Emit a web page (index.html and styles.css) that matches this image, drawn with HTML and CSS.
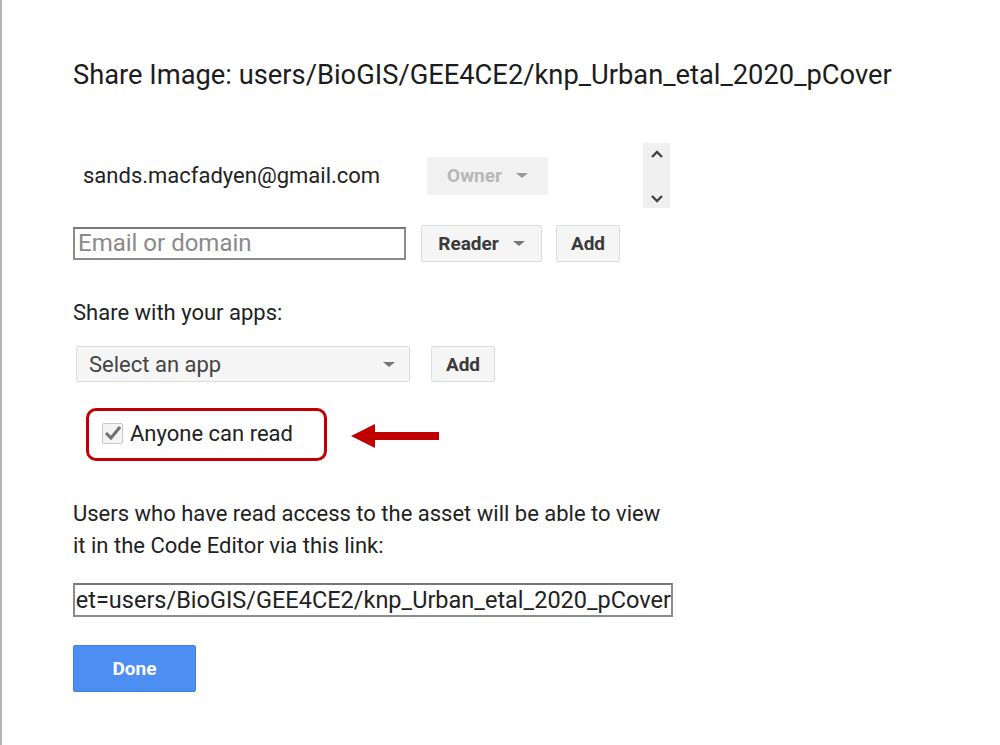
FILE: index.html
```html
<!DOCTYPE html>
<html lang="en">
<head>
  <meta charset="UTF-8" />
  <meta name="viewport" content="width=device-width, initial-scale=1" />
  <title>Share Image</title>
  <link rel="stylesheet" href="styles.css">
</head>
<body>
  <div class="dialog">
    <h1 class="title">Share Image: users/BioGIS/GEE4CE2/knp_Urban_etal_2020_pCover</h1>

    <div class="owner-row">
      <div class="owner-email">sands.macfadyen@gmail.com</div>
      <div class="btn btn-disabled">Owner <span class="caret"></span></div>
      <div class="scroller">
        <svg width="14" height="10" viewBox="0 0 14 10"><polyline points="2,8 7,3 12,8" fill="none" stroke="#444" stroke-width="2.4"/></svg>
        <svg width="14" height="10" viewBox="0 0 14 10"><polyline points="2,2 7,7 12,2" fill="none" stroke="#444" stroke-width="2.4"/></svg>
      </div>
    </div>

    <div class="add-row">
      <div class="text-input placeholder">Email or domain</div>
      <div class="btn btn-role">Reader <span class="caret"></span></div>
      <div class="btn btn-add">Add</div>
    </div>

    <p class="label">Share with your apps:</p>

    <div class="app-row">
      <div class="select">Select an app <span class="caret"></span></div>
      <div class="btn btn-add btn-add-app">Add</div>
    </div>

    <div class="public-row">
      <div class="highlight">
        <span class="checkbox">
          <svg width="19" height="19" viewBox="0 0 19 19"><polyline points="3,9 8,14 17,3" fill="none" stroke="#6f6f6f" stroke-width="3"/></svg>
        </span>
        <span class="check-label">Anyone can read</span>
      </div>
      <svg class="arrow" width="88" height="26" viewBox="0 0 88 26"><polygon points="0,13 24,1 24,9 88,9 88,17 24,17 24,25" fill="#c00000"/></svg>
    </div>

    <p class="note">Users who have read access to the asset will be able to view it in the Code Editor via this link:</p>

    <div class="link-box"><span>https://code.earthengine.google.com/?asset=users/BioGIS/GEE4CE2/knp_Urban_etal_2020_pCover</span></div>

    <div class="btn-done">Done</div>
  </div>
</body>
</html>
```

FILE: styles.css
```css
* {
  margin: 0;
  padding: 0;
  box-sizing: border-box;
}

html, body {
  height: 100%;
  background: #fff;
  font-family: Roboto, 'Liberation Sans', Arial, sans-serif;
  color: #222;
}

body {
  border-left: 2px solid #b4b4b4;
  overflow: hidden;
}

.dialog {
  padding: 59px 0 0 71px;
}

.title {
  font-size: 27.3px;
  font-weight: 400;
  line-height: 32px;
  color: #1c1c1c;
}

.owner-row {
  display: flex;
  align-items: center;
  height: 65px;
  margin-top: 52px;
}

.owner-email {
  width: 354px;
  padding-left: 10px;
  font-size: 22px;
}

.btn {
  display: flex;
  align-items: center;
  justify-content: center;
  font-size: 19px;
  font-weight: 700;
  border-radius: 2px;
}

.btn-disabled {
  width: 121px;
  height: 38px;
  background: #f1f1f1;
  color: #b8b8b8;
}

.caret {
  display: inline-block;
  width: 0;
  height: 0;
  margin-left: 14px;
  border-left: 6px solid transparent;
  border-right: 6px solid transparent;
  border-top: 5px solid #777;
}

.btn-disabled .caret {
  border-top-color: #999;
}

.scroller {
  width: 27px;
  height: 65px;
  margin-left: 95px;
  background: #f0f0f0;
  display: flex;
  flex-direction: column;
  align-items: center;
  justify-content: space-between;
  padding: 6px 0 4px;
}

.add-row {
  display: flex;
  align-items: center;
  margin-top: 17px;
}

.text-input {
  width: 333px;
  height: 33px;
  border: 2px solid #8c8c8c;
  border-top-color: #777;
  font-size: 24px;
  line-height: 29px;
  padding-left: 3px;
}

.placeholder {
  color: #8a8a8a;
}

.btn-role,
.btn-add {
  height: 37px;
  background: #f5f5f5;
  border: 1px solid #dcdcdc;
  color: #3a3a3a;
}

.btn-role {
  width: 121px;
  margin-left: 15px;
}

.btn-add {
  width: 64px;
  margin-left: 14px;
}

.label {
  margin-top: 38px;
  font-size: 22px;
  line-height: 26px;
}

.app-row {
  display: flex;
  align-items: center;
  margin-top: 20px;
}

.select {
  width: 334px;
  height: 36px;
  margin-left: 3px;
  background: #f5f5f5;
  border: 1px solid #dcdcdc;
  border-radius: 2px;
  font-size: 22px;
  color: #444;
  display: flex;
  align-items: center;
  justify-content: space-between;
  padding: 0 14px 0 12px;
}

.btn-add-app {
  height: 36px;
  margin-left: 21px;
}

.public-row {
  display: flex;
  align-items: center;
  margin-top: 26px;
}

.highlight {
  width: 241px;
  height: 53px;
  margin-left: 13px;
  border: 3px solid #c00000;
  border-radius: 10px;
  display: flex;
  align-items: center;
  padding: 0 0 2px 13px;
}

.checkbox {
  width: 21px;
  height: 21px;
  border: 1px solid #c8c8c8;
  border-radius: 2px;
  background: #f4f4f4;
  display: flex;
  align-items: center;
  justify-content: center;
}

.check-label {
  margin-left: 7px;
  font-size: 22px;
}

.arrow {
  margin-left: 24px;
  margin-top: 3px;
}

.note {
  width: 600px;
  margin-top: 37px;
  font-size: 22px;
  line-height: 32px;
}

.link-box {
  width: 600px;
  height: 34px;
  margin-top: 21px;
  border: 2px solid #8c8c8c;
  border-top-color: #777;
  display: flex;
  justify-content: flex-end;
  align-items: center;
  overflow: hidden;
  white-space: nowrap;
  font-size: 23.5px;
  padding-right: 0;
}

.btn-done {
  width: 123px;
  height: 47px;
  margin-top: 28px;
  background: #4d8ef3;
  border: 1px solid #3f7fe4;
  border-radius: 2px;
  color: #fff;
  font-size: 19px;
  font-weight: 700;
  display: flex;
  align-items: center;
  justify-content: center;
}
```
